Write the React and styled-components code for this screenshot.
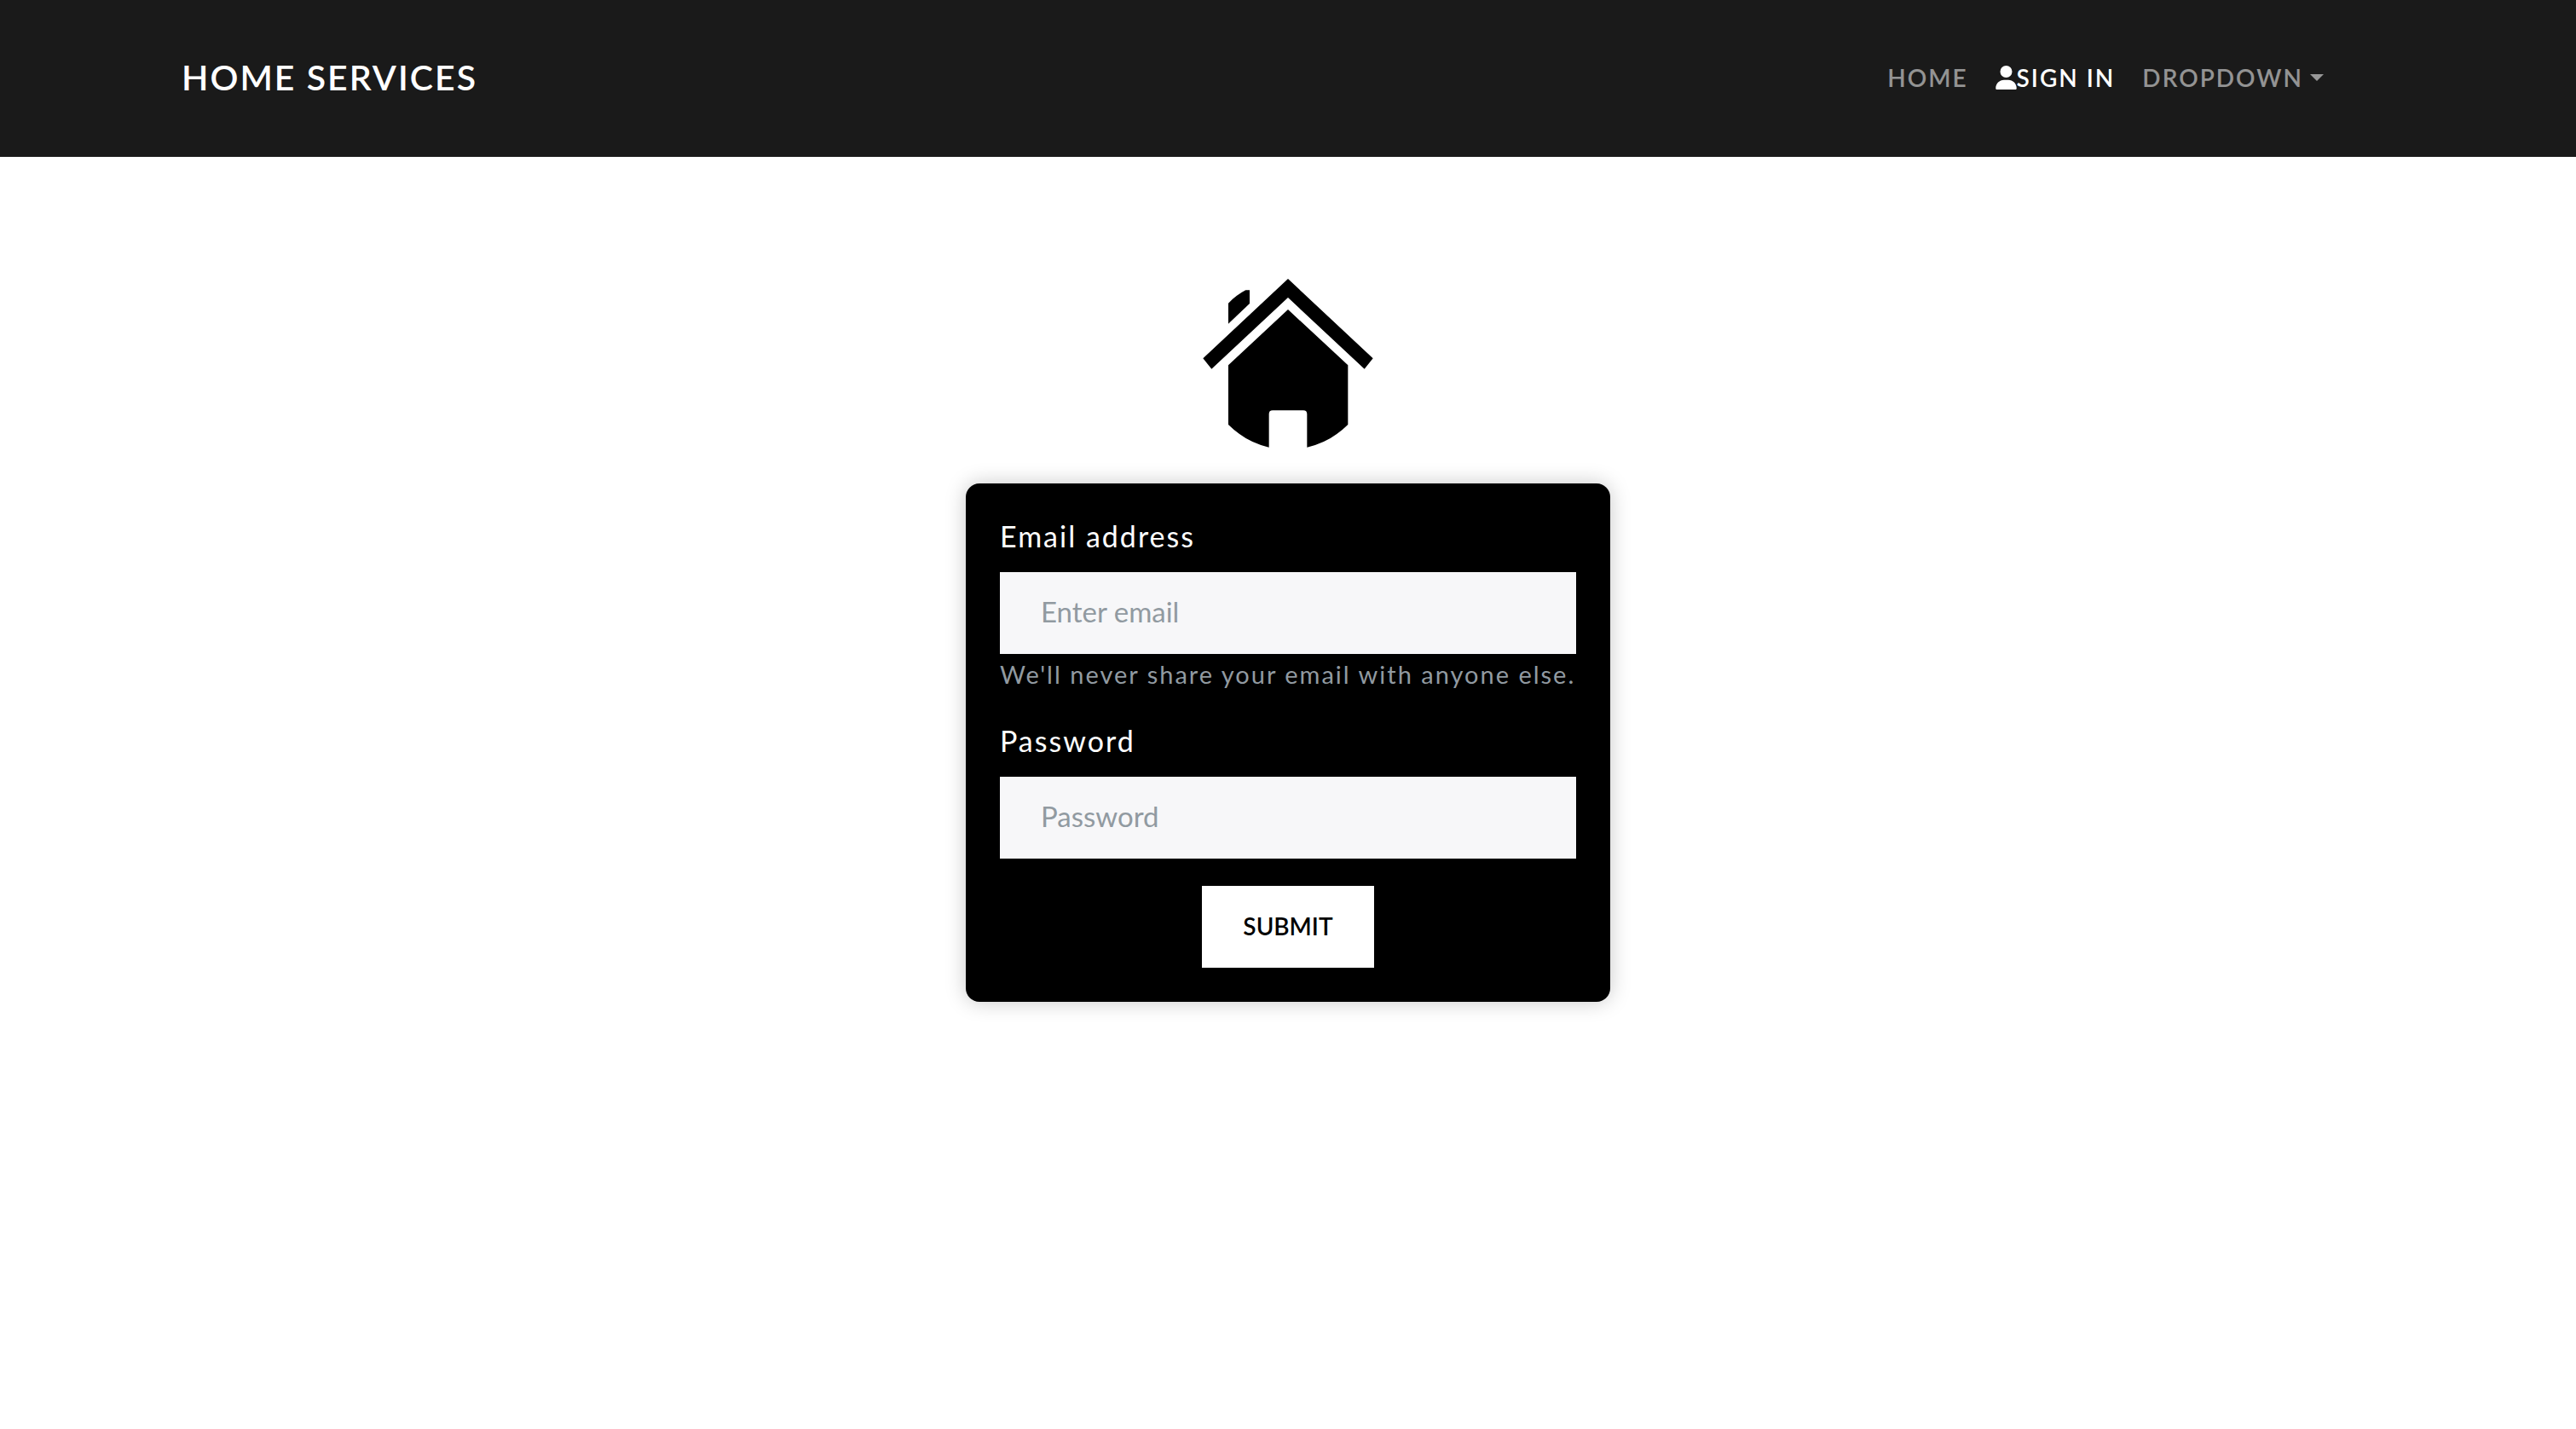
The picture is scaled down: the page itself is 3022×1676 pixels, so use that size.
import React from "react";
import styled, { createGlobalStyle, css } from "styled-components";

const GlobalStyle = createGlobalStyle`
  *, *::before, *::after { box-sizing: border-box; }
  body {
    margin: 0;
    background: #fff;
    color: #fff;
    font-family: Lato, "Open Sans", sans-serif;
  }
`;

const Header = styled.header`
  background: #1a1a1a;
`;

const HeaderInner = styled.div`
  display: flex;
  align-items: center;
  justify-content: space-between;
  max-width: 2640px;
  margin: 0 auto;
  padding: 67px 89px 69px 22px;
`;

const Brand = styled.a`
  color: #fff;
  font-size: 41px;
  font-weight: 600;
  line-height: 48px;
  letter-spacing: 2px;
  text-decoration: none;
  text-transform: uppercase;
`;

const Nav = styled.nav`
  display: flex;
  align-items: center;
`;

const navItem = css`
  display: flex;
  align-items: center;
  padding: 0 16px;
  border: 0;
  background: none;
  color: ${(p) => (p.$active ? "#fff" : "rgba(255, 255, 255, 0.55)")};
  font-family: inherit;
  font-size: 28px;
  font-weight: 600;
  line-height: 48px;
  letter-spacing: 2px;
  text-decoration: none;
  text-transform: uppercase;
  cursor: pointer;
`;

const NavLink = styled.a`
  ${navItem}
`;

const NavToggle = styled.button`
  ${navItem}
`;

const Caret = styled.span`
  margin-left: 8px;
  border-top: 8px solid currentColor;
  border-left: 8px solid transparent;
  border-right: 8px solid transparent;
`;

const UserIcon = styled.svg`
  width: 25px;
  height: 28px;
  fill: currentColor;
`;

const Main = styled.main`
  display: flex;
  flex-direction: column;
  align-items: center;
  gap: 42px;
  padding: 143px 24px 80px;
`;

const HouseIcon = styled.svg`
  width: 200px;
  height: 198px;
  fill: #000;
`;

const Card = styled.form`
  display: flex;
  flex-direction: column;
  width: 100%;
  max-width: 756px;
  padding: 40px;
  border-radius: 16px;
  background: #000;
  box-shadow: 0 0 24px rgba(0, 0, 0, 0.22);
`;

const Field = styled.div`
  display: flex;
  flex-direction: column;
  margin-bottom: 32px;
`;

const Label = styled.label`
  margin-bottom: 20px;
  font-size: 34px;
  line-height: 44px;
  letter-spacing: 2px;
`;

const Input = styled.input`
  width: 100%;
  height: 96px;
  padding: 0 48px 4px;
  border: 0;
  border-radius: 0;
  background: #f7f7f9;
  color: #55595c;
  font-family: inherit;
  font-size: 33px;

  &::placeholder {
    color: #919aa1;
    opacity: 1;
  }
`;

const Hint = styled.small`
  color: #919aa1;
  font-size: 29px;
  line-height: 48px;
  letter-spacing: 2px;
  white-space: nowrap;
`;

const Submit = styled.button`
  align-self: center;
  height: 96px;
  padding: 0 48px 2px;
  border: 0;
  background: #fff;
  color: #000;
  font-family: inherit;
  font-size: 28px;
  font-weight: 600;
  text-transform: uppercase;
  cursor: pointer;
`;

export default function App() {
  return (
    <>
      <GlobalStyle />
      <Header>
        <HeaderInner>
          <Brand href="#">Home Services</Brand>
          <Nav>
            <NavLink href="#">Home</NavLink>
            <NavLink href="#" $active aria-current="page">
              <UserIcon viewBox="0 0 448 512" aria-hidden="true">
                <path d="M224 256A128 128 0 1 0 224 0a128 128 0 1 0 0 256zm-45.7 48C79.8 304 0 383.8 0 482.3C0 498.7 13.3 512 29.7 512H418.3c16.4 0 29.7-13.3 29.7-29.7C448 383.8 368.2 304 269.7 304H178.3z" />
              </UserIcon>
              Sign In
            </NavLink>
            <NavToggle type="button" aria-haspopup="true">
              Dropdown
              <Caret />
            </NavToggle>
          </Nav>
        </HeaderInner>
      </Header>
      <Main>
        <HouseIcon viewBox="60 51 600 594" aria-hidden="true">
          <path d="M360 51L659 331L629 368L360 117L91 368L61 331Z" />
          <path d="M150 137Q178 108 211 91H225V138L150 209Z" />
          <path d="M360 159L571 355V564Q510 625 427 644V527Q427 514 414 514H306Q293 514 293 527V644Q211 625 150 564V355Z" />
        </HouseIcon>
        <Card onSubmit={(event) => event.preventDefault()}>
          <Field>
            <Label htmlFor="email">Email address</Label>
            <Input id="email" type="email" placeholder="Enter email" aria-describedby="email-hint" />
            <Hint id="email-hint">We'll never share your email with anyone else.</Hint>
          </Field>
          <Field>
            <Label htmlFor="password">Password</Label>
            <Input id="password" type="password" placeholder="Password" />
          </Field>
          <Submit type="submit">Submit</Submit>
        </Card>
      </Main>
    </>
  );
}
